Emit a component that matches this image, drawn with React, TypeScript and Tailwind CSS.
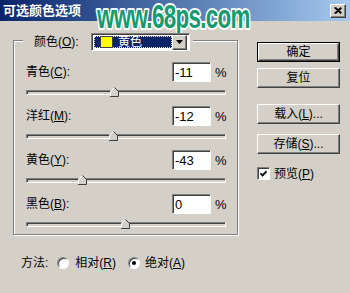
const channels = [
  { name: "青色", key: "C", value: -11 },
  { name: "洋红", key: "M", value: -12 },
  { name: "黄色", key: "Y", value: -43 },
  { name: "黑色", key: "B", value: 0 },
];

const raised =
  "border border-t-white border-l-white border-b-[#404040] border-r-[#404040] shadow-[inset_-1px_-1px_0_#808080] bg-[#d4d0c8]";
const sunken =
  "border border-t-[#808080] border-l-[#808080] border-b-white border-r-white shadow-[inset_1px_1px_0_#404040]";

const Slider = ({ value }: { value: number }) => (
  <div className="h-[24px] pt-[8px]">
    <div className={`relative h-[5px] w-[200px] bg-[#d4d0c8] ${sunken}`}>
      <svg
        className="absolute -top-[4px]"
        style={{ left: value + 94 }}
        width="9"
        height="10"
        viewBox="0 0 9 10"
      >
        <polygon points="0,4 4,0 8,4 8,9 0,9" fill="#d4d0c8" />
        <polyline points="0.5,9 0.5,4.5 4.5,0.5" fill="none" stroke="#fff" strokeWidth="1" />
        <polyline points="4.5,0.5 8.5,4.5 8.5,9.5 0,9.5" fill="none" stroke="#404040" strokeWidth="1" />
      </svg>
    </div>
  </div>
);

const Button = ({ children, primary }: { children: React.ReactNode; primary?: boolean }) =>
  primary ? (
    <div className="h-[20px] border border-black">
      <div className={`h-full flex items-center justify-center text-[12px] leading-none ${raised}`}>{children}</div>
    </div>
  ) : (
    <div className={`h-[20px] flex items-center justify-center text-[12px] leading-none ${raised}`}>{children}</div>
  );

const Radio = ({ checked }: { checked?: boolean }) => (
  <div className="w-[12px] h-[12px] rounded-full border border-t-[#808080] border-l-[#808080] border-b-white border-r-white bg-white shadow-[inset_1px_1px_0_#404040] flex items-center justify-center">
    {checked && <div className="w-[4px] h-[4px] rounded-full bg-black" />}
  </div>
);

export default function App() {
  return (
    <div className="relative w-[350px] h-[293px] overflow-hidden bg-[#d4d0c8] text-black font-['Liberation_Sans','Noto_Sans_CJK_SC',sans-serif]">
      {/* title bar */}
      <div className="h-[21px] flex items-center justify-between pl-[3px] pr-[4px] bg-gradient-to-r from-[#0a246a] to-[#a6caf0]">
        <span className="text-white font-bold text-[13px] leading-none">可选颜色选项</span>
        <div className={`w-[16px] h-[14px] flex items-center justify-center ${raised}`}>
          <svg width="8" height="7" viewBox="0 0 8 7">
            <path d="M0.5 0.5 L7 6.5 M1.5 0.5 L7.5 6 M7 0.5 L0.5 6.5 M7.5 1 L1.5 6.5" stroke="#000" strokeWidth="1.2" />
          </svg>
        </div>
      </div>

      {/* watermark */}
      <svg
        className="absolute left-[95px] top-0"
        width="158"
        height="36"
        viewBox="0 0 240 36"
        preserveAspectRatio="none"
      >
        <text
          x="3"
          y="28"
          fontFamily="Liberation Sans, sans-serif"
          fontWeight="bold"
          fontSize="34"
          letterSpacing="-1"
          fill="#179b6e"
          stroke="#fff"
          strokeWidth="4"
          strokeLinejoin="round"
          paintOrder="stroke"
        >
          www.68ps.com
        </text>
      </svg>

      <div className="flex items-start">
        {/* group box */}
        <div className="relative ml-[13px] mt-[19px] w-[225px] h-[195px] border border-[#808080] shadow-[inset_1px_1px_0_#fff,1px_1px_0_#fff] pl-[12px] pt-[21px]">
          <div className="absolute left-[9px] -top-[8px] h-[18px] flex items-center bg-[#d4d0c8] pl-[11px] pr-[3px]">
            <span className="w-[57px] text-[12px] leading-none">
              颜色(<u>O</u>):
            </span>
            <div className={`w-[99px] h-[18px] bg-white flex items-center p-[2px] ${sunken}`}>
              <div className="flex-1 h-full bg-[#0a246a] border border-dotted border-[#e8e8c0] flex items-center pl-[5px] gap-[5px]">
                <div className="w-[13px] h-[12px] bg-[#ffff00] border border-[#404040]" />
                <span className="text-white text-[12px] leading-none">黄色</span>
              </div>
              <div className={`w-[15px] h-[15px] -my-px flex items-center justify-center ${raised}`}>
                <svg width="7" height="4" viewBox="0 0 7 4">
                  <polygon points="0,0 7,0 3.5,4" fill="#000" />
                </svg>
              </div>
            </div>
          </div>

          {channels.map((c) => (
            <div key={c.key}>
              <div className="h-[20px] flex items-center">
                <span className="w-[146px] text-[12px] leading-none">
                  {c.name}(<u>{c.key}</u>):
                </span>
                <div className={`w-[39px] h-[20px] bg-white flex items-center pl-[2px] text-[13px] leading-none ${sunken}`}>
                  {c.value}
                </div>
                <span className="ml-[4px] text-[13px] leading-none">%</span>
              </div>
              <Slider value={c.value} />
            </div>
          ))}
        </div>

        {/* buttons */}
        <div className="ml-[19px] mt-[21px] w-[83px] flex flex-col">
          <Button primary>确定</Button>
          <div className="mt-[6px]">
            <Button>复位</Button>
          </div>
          <div className="mt-[16px]">
            <Button>
              载入(<u>L</u>)...
            </Button>
          </div>
          <div className="mt-[10px]">
            <Button>
              存储(<u>S</u>)...
            </Button>
          </div>
          <div className="mt-[13px] flex items-center gap-[4px]">
            <div className={`w-[13px] h-[13px] bg-white flex items-center justify-center ${sunken}`}>
              <svg width="7" height="7" viewBox="0 0 7 7">
                <path d="M0.5 3 L2.5 5 L6.5 1 M0.5 4 L2.5 6 L6.5 2" stroke="#000" strokeWidth="1.2" fill="none" />
              </svg>
            </div>
            <span className="text-[12px] leading-none">
              预览(<u>P</u>)
            </span>
          </div>
        </div>
      </div>

      {/* method */}
      <div className="mt-[20px] h-[16px] pl-[21px] flex items-center text-[12px] leading-none">
        <span>方法:</span>
        <div className="ml-[9px]">
          <Radio />
        </div>
        <span className="ml-[6px]">
          相对(<u>R</u>)
        </span>
        <div className="ml-[12px]">
          <Radio checked />
        </div>
        <span className="ml-[5px]">
          绝对(<u>A</u>)
        </span>
      </div>
    </div>
  );
}
